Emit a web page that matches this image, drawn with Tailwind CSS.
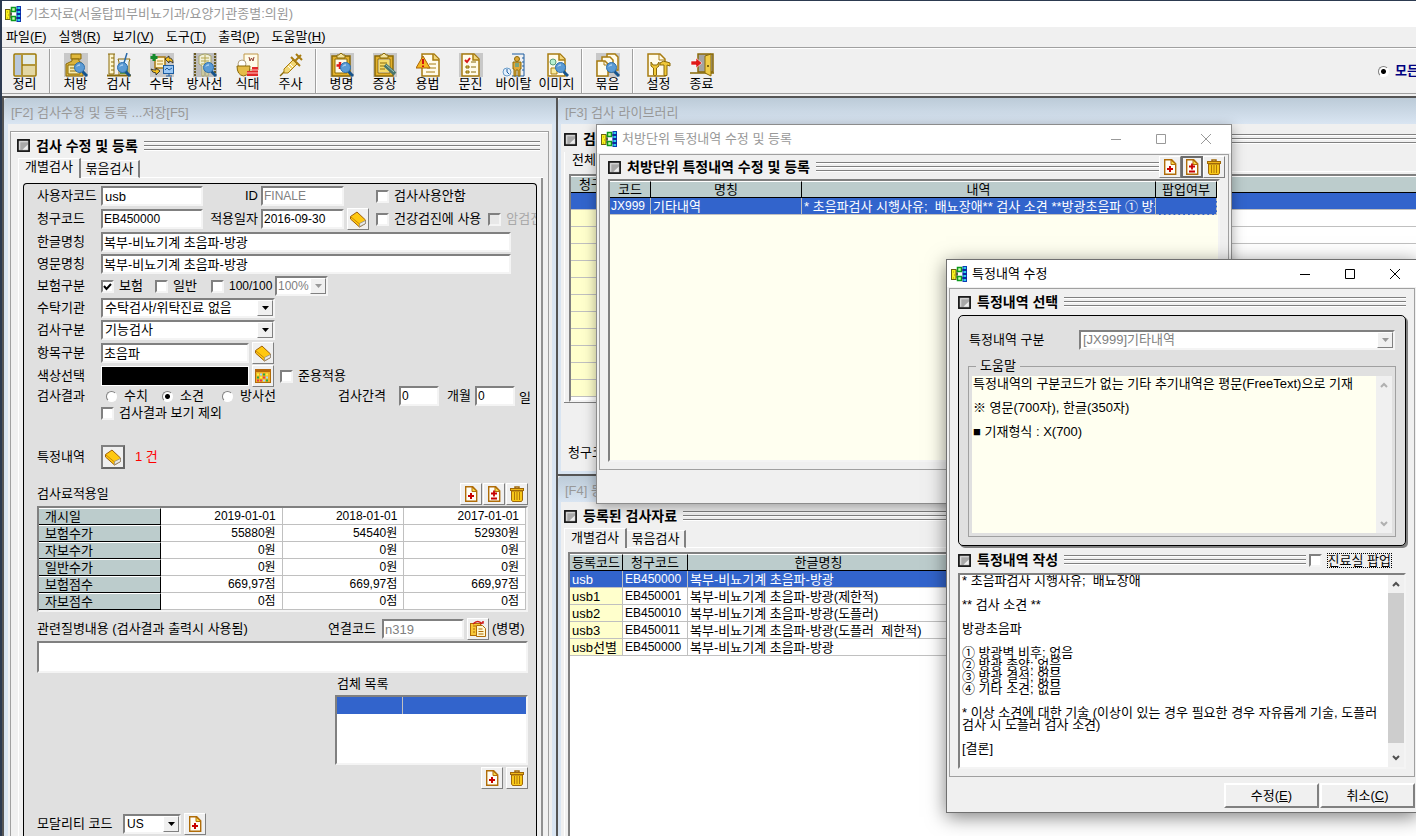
<!DOCTYPE html>
<html lang="ko">
<head>
  <meta charset="UTF-8" />
  <meta name="viewport" content="width=device-width, initial-scale=1.0" />
  <title>기초자료</title>
  <script src="https://cdn.jsdelivr.net/npm/@tailwindcss/browser@4"></script>
</head>
<body class="bg-[#f0f0f0] text-black text-[13px] leading-4 font-['Liberation_Sans','Noto_Sans_CJK_KR',sans-serif]">

  <!-- Icon set -->
  <svg class="hidden">
    <defs>
      <symbol id="app" viewBox="0 0 16 16">
        <path d="M4 8h3M6 4v8M10 4h2M10 12h2" stroke="#222" fill="none"/>
        <rect x=".5" y="3.500" width="4.500" height="10" fill="#f8f01c" stroke="#6b6410"/><path d="M2 6h1M3 9h1M2 12h1" stroke="#a89c10"/>
        <rect x="6.500" y="1.500" width="4" height="4" fill="#c8ffb0" stroke="#0c9a1c" stroke-width="1.500"/>
        <rect x="6.500" y="10.500" width="4" height="4" fill="#c8ffb0" stroke="#0c9a1c" stroke-width="1.500"/>
        <rect x="11.500" y="0" width="4.500" height="16" fill="#0d3ab4"/>
        <path d="M12.500 2h2.500M12.500 6h2.500M12.500 10h2.500M12.500 14h2.500" stroke="#2cd0e8" stroke-width="2"/>
        <path d="M11.500 4h4.500M11.500 8h4.500M11.500 12h4.500" stroke="#04148c"/>
      </symbol>
      <symbol id="mark" viewBox="0 0 12 12">
        <rect x=".8" y=".8" width="10.400" height="10.400" fill="#a8a8a8" stroke="#111" stroke-width="1.500"/>
        <path d="M2 2h8v1H3v7H2z" fill="#e0e0e0"/><path d="M10 5v5H5z" fill="#eee"/>
      </symbol>
      <symbol id="lens" viewBox="0 0 24 24">
        <path d="M18.500 18.500l4.500 4.500" stroke="#16548c" stroke-width="3"/>
        <circle cx="15.500" cy="14.500" r="5" fill="#5b9bd5" stroke="#2d6fae"/>
        <path d="M13 13.500q1-2 3-1.500" stroke="#d4ebff" fill="none"/>
      </symbol>
      <symbol id="layout" viewBox="0 0 24 24">
        <rect x="1" y="1" width="22" height="22" rx="1" fill="#f5efc8" stroke="#9a7808" stroke-width="1.500"/>
        <rect x="2" y="2" width="6" height="20" fill="#b8c8dc"/><path d="M10 2h12v9H10z" fill="#e3ece8"/><path d="M10 13h12v9H10z" fill="#e3d8a4"/>
        <path d="M9 2v20M9 12h13" stroke="#9a7808" stroke-width="1.500"/>
      </symbol>
      <symbol id="bottle" viewBox="0 0 24 24">
        <rect width="24" height="24" fill="#c8c8c8"/>
        <path d="M7 1h10v5H7z" fill="#e0b83c" stroke="#8a6a08"/>
        <path d="M8 6v2L2 11v12h17V11l-4-3V6z" fill="#d9b23c" stroke="#8a6a08"/>
        <path d="M4 12h12v9H4z" fill="#f7ecae" stroke="#8a6a08"/><path d="M6 15h5M6 18h6" stroke="#8a6a08"/>
        <use href="#lens"/>
      </symbol>
      <symbol id="beaker" viewBox="0 0 24 24">
        <path d="M1 1h7M2 1v20h5V1" fill="#fff7d0" stroke="#8a6a08"/><path d="M4 5h3M4 9h3M4 13h3M4 17h3" stroke="#8a6a08"/>
        <path d="M0 22.500h24" stroke="#8a6a08" stroke-width="2"/>
        <path d="M11 6h12l-1 3v13H12V9z" fill="#e8f2f8" stroke="#8a6a08"/><path d="M13 13h8v8h-8z" fill="#5a9448"/>
        <path d="M17 10l3-10" stroke="#2868a8" stroke-width="1.500"/><use href="#lens"/>
      </symbol>
      <symbol id="exchange" viewBox="0 0 24 24">
        <rect width="24" height="24" fill="#c8c8c8"/>
        <path d="M5 4h10v11H5z" fill="#fff5cc" stroke="#a87810" stroke-width="1.500"/><path d="M7 8h6M7 11h6" stroke="#b88820"/>
        <path d="M4 1v7M.5 4.500h7" stroke="#138a2a" stroke-width="3"/>
        <path d="M15 6l4-3v2q4 0 4 5-2-2-4-2v2z" fill="#f4c020" stroke="#222" stroke-width=".8"/>
        <path d="M10 18l-4 4v-2q-4 0-5-4 2 1 5 1v-2z" fill="#f4c020" stroke="#222" stroke-width=".8"/>
        <rect x="13.500" y="12.500" width="10" height="8" fill="#9cc8f4" stroke="#1c5ca0"/><path d="M15 17l2-2 2 2 3-2M16 23h6M19 20v3" stroke="#1c5ca0" fill="none"/>
      </symbol>
      <symbol id="xray" viewBox="0 0 24 24">
        <rect width="24" height="24" fill="#bcbcbc"/>
        <path d="M2 0v24M22 0v24" stroke="#6a5a20" stroke-width="2" stroke-dasharray="2 1"/>
        <path d="M6 3q6-4 12 0v8l-3 2v10h-2v-7h-2v7H9V13l-3-2z" fill="#f0f0d8" stroke="#a8a468"/>
        <path d="M12 2v14M8 5h8M8 8h8M8 11h8" stroke="#b4a44c"/><use href="#lens"/>
      </symbol>
      <symbol id="meal" viewBox="0 0 24 24">
        <path d="M8 1h14v16H8z" fill="#fffbe8" stroke="#c09848"/><path d="M13 4l1 4 1.500-3L17 8l1-4" stroke="#904030" fill="none"/>
        <circle cx="6" cy="11" r="4" fill="#fff" stroke="#b0a080"/><path d="M1 13h13q0 9-6.500 10Q1 22 1 13z" fill="#e4bc48" stroke="#8a6a08"/>
        <path d="M16 14h6v9h-6zM11 18h5v5h-5z" fill="#e02828"/><path d="M16 17h6M11 20h11" stroke="#ffc4c4"/>
      </symbol>
      <symbol id="syringe" viewBox="0 0 24 24">
        <path d="M1 23l6-6" stroke="#8a6a08" stroke-width="1.500"/>
        <path d="M5 16l9-9 4 4-9 9H5z" fill="#f2d878" stroke="#a87c10"/>
        <path d="M16 8l6-6M12 4l9 9M17 1l6 6" stroke="#a87c10" stroke-width="2"/><path d="M9 13l3 3M11 11l3 3" stroke="#fff"/>
      </symbol>
      <symbol id="board" viewBox="0 0 24 24">
        <rect width="24" height="24" fill="#c8c8c8"/>
        <rect x="2" y="3" width="18" height="20" fill="#e2b02c" stroke="#8a6a08" stroke-width="1.500"/>
        <path d="M5 6h12v14H5z" fill="#fffbe8" stroke="#8a6a08"/><path d="M7 5V2h2l1-1.500h2L13 2h2v3z" fill="#f4e4a0" stroke="#8a6a08"/>
      </symbol>
      <symbol id="disease" viewBox="0 0 24 24">
        <use href="#board"/><path d="M10 9v7M6.500 12.500h7" stroke="#e01818" stroke-width="2.500"/><use href="#lens"/>
      </symbol>
      <symbol id="symptom" viewBox="0 0 24 24">
        <use href="#board"/><path d="M6 7h10v12H6z" fill="#f6dc6c"/><path d="M7 10h7M7 13h6M7 16h5" stroke="#8a6a08"/>
        <path d="M12 12l10 9" stroke="#48746c" stroke-width="4"/><path d="M13 12l8 7" stroke="#9cc4b8"/>
      </symbol>
      <symbol id="page" viewBox="0 0 24 24">
        <path d="M3 1h12l5 5v17H3z" fill="#fffbea" stroke="#a87c10" stroke-width="1.500"/><path d="M14 1v6h6" fill="#f4d878" stroke="#a87c10" stroke-width="1.500"/>
      </symbol>
      <symbol id="usage" viewBox="0 0 24 24">
        <g transform="translate(3 0)"><use href="#page"/></g><path d="M13 11h7M11 15h9M10 19h9" stroke="#a87c10"/>
        <path d="M7 3l7 12H0z" fill="#f8b820" stroke="#a86408"/><path d="M7 6v5M7 12.500v1.500" stroke="#d01010" stroke-width="2"/>
      </symbol>
      <symbol id="survey" viewBox="0 0 24 24">
        <rect width="24" height="24" fill="#c8c8c8"/><use href="#page"/>
        <path d="M6 7l2 2 3-4" stroke="#d81818" stroke-width="2" fill="none"/><path d="M7 13h3v2H7zM7 18h3v2H7z" fill="#ecd060" stroke="#8a6a08"/>
        <path d="M12 9h5M12 14h5M12 19h5" stroke="#8a6a08"/>
      </symbol>
      <symbol id="vital" viewBox="0 0 24 24">
        <path d="M10 1h12M22 1v22M10 23h12M20 5h2M20 9h2M20 13h2M20 17h2" stroke="#1c5ca0"/>
        <circle cx="15" cy="6" r="2.500" fill="#e0a838" stroke="#8a6a08"/><path d="M11 9h8v7h-1v7h-2v-6h-2v6h-2v-7h-1z" fill="#e0a838" stroke="#8a6a08"/>
        <path d="M13 10h4v4h-4z" fill="#7ca47c"/><circle cx="5" cy="19" r="4" fill="#e4f0fc" stroke="#6a9cc8"/><path d="M5 16v3l2 2" stroke="#1c5ca0" fill="none"/>
      </symbol>
      <symbol id="image" viewBox="0 0 24 24">
        <use href="#page"/><circle cx="8" cy="9" r="3" fill="#b8f0d0" stroke="#5a9c78"/><path d="M6 15h6v6H6z" fill="#f8eca0" stroke="#a87c10"/><use href="#lens"/>
      </symbol>
      <symbol id="bundle" viewBox="0 0 24 24">
        <rect width="24" height="24" fill="#c8c8c8"/>
        <path d="M11 1h8l3 3v13H11z" fill="#fffbea" stroke="#a87c10" stroke-width="1.500"/>
        <path d="M6 4h8l3 3v12H6z" fill="#fffbea" stroke="#a87c10" stroke-width="1.500"/>
        <path d="M1 8h8l3 3v12H1z" fill="#fffbea" stroke="#a87c10" stroke-width="1.500"/><path d="M8 8v4h4" fill="none" stroke="#a87c10"/><use href="#lens"/>
      </symbol>
      <symbol id="tools" viewBox="0 0 24 24">
        <path d="M1 1h12l5 5v17H1z" fill="#fffbea" stroke="#a87c10" stroke-width="1.500"/><path d="M12 1v6h6" fill="none" stroke="#a87c10"/>
        <path d="M4 9v4l2.500 2v7q1.500 2 3 0v-7l2.500-2V9l-2 3H6z" fill="#f0c838" stroke="#8a6a08"/>
        <path d="M13 10q3-3 7-1l3 1v3l-3-1v10.500h-3V12h-4z" fill="#f0c838" stroke="#8a6a08"/>
      </symbol>
      <symbol id="door" viewBox="0 0 24 24">
        <path d="M8 1h15v18H8z" fill="#a4a4a4" stroke="#8a6a08" stroke-width="1.500"/><path d="M0 20h24" stroke="#8a6a08" stroke-width="1.500"/>
        <path d="M15 3l6-2v22l-6-3z" fill="#f0cc48" stroke="#8a6a08"/><path d="M18 12v2" stroke="#5a4404" stroke-width="1.500"/>
        <path d="M1 8h5V5l6 5-6 5v-3H1z" fill="#e01818" stroke="#fff" stroke-width=".6"/>
      </symbol>
      <symbol id="doc" viewBox="0 0 16 16">
        <path d="M2.700 .7h7l4 4v10.600h-11z" fill="#fffdf4" stroke="#b06c08" stroke-width="1.400"/><path d="M9 1v4.500h5z" fill="#f8d848" stroke="#b06c08"/>
      </symbol>
      <symbol id="add" viewBox="0 0 16 16"><use href="#doc"/><path d="M8 7v6M5 10h6" stroke="#c80000" stroke-width="2"/></symbol>
      <symbol id="edit" viewBox="0 0 16 16"><use href="#doc"/><path d="M8 4.500v6M5 7.500h6M5 12.500h6" stroke="#c80000" stroke-width="1.800"/></symbol>
      <symbol id="trash" viewBox="0 0 16 16">
        <path d="M6 2V1h4v1" stroke="#a06808" stroke-width="1.500" fill="none"/><rect x="1.500" y="2.500" width="13" height="2" fill="#f0b818" stroke="#a06808"/>
        <path d="M2.500 5h11v9l-1 1.500h-9l-1-1.500z" fill="#f8c818" stroke="#a06808"/><path d="M5.500 6v8M8 6v8M10.500 6v8" stroke="#b07808"/>
      </symbol>
      <symbol id="book" viewBox="0 0 18 18">
        <path d="M1.500 6.500L8 2l8.500 8v3.500L10.500 17 1.500 9z" fill="#ffc810" stroke="#a06008"/>
        <path d="M10.500 13.500l6-3v3l-6 3.200z" fill="#e8e8e8" stroke="#888" stroke-width=".7"/><path d="M2 7l8.500 7" stroke="#c88808"/>
      </symbol>
      <symbol id="palette" viewBox="0 0 16 14">
        <rect x=".5" y=".5" width="15" height="13" fill="#f0b428" stroke="#b06c08"/><path d="M0 0h16v3H0z" fill="#b8690a"/>
        <path d="M2 5.500h2M11 5.500h2M5 8.500h2" stroke="#f4f840" stroke-width="2"/>
        <path d="M8 5.500h2M2 8.500h2M11 11.500h2" stroke="#28a848" stroke-width="2"/>
        <path d="M5 11.500h2M8 8.500h2M2 11.500h2" stroke="#e83850" stroke-width="2"/><path d="M5 5.500h2M11 8.500h2M8 11.500h2" stroke="#a0d8ff" stroke-width="2"/>
      </symbol>
      <symbol id="copy" viewBox="0 0 18 18">
        <rect x="1.500" y="3.500" width="10" height="12" fill="#f8c838" stroke="#b06c08"/><path d="M7.500 5.500h6l3 3v8h-9z" fill="#fff8d0" stroke="#b06c08"/>
        <path d="M4 6h3M4 9h2M4 12h2M9.500 9h4M9.500 11.500h5M9.500 14h5" stroke="#b06c08"/><path d="M4 4q5-5 9 0M11 3h3V1" stroke="#d01818" stroke-width="1.500" fill="none"/>
      </symbol>
      <symbol id="down" viewBox="0 0 7 4"><path d="M0 0h7L3.500 4z" fill="currentColor"/></symbol>
      <symbol id="chev" viewBox="0 0 8 6"><path d="M1 5l3-3 3 3" fill="none" stroke="currentColor" stroke-width="2"/></symbol>
      <symbol id="wmin" viewBox="0 0 12 12"><path d="M1 6.500h10" stroke="currentColor"/></symbol>
      <symbol id="wmax" viewBox="0 0 12 12"><path d="M1.500 1.500h9v9h-9z" fill="none" stroke="currentColor"/></symbol>
      <symbol id="wclose" viewBox="0 0 12 12"><path d="M1 1l10 10M11 1L1 11" stroke="currentColor"/></symbol>
    </defs>
  </svg>

  <div class="relative h-screen flex flex-col overflow-hidden border-t border-l-2 border-[#2c3a50]">

    <!-- Title bar -->
    <header class="h-[26px] shrink-0 bg-white flex items-center gap-[5px] pl-[3px] text-[#999]">
      <svg class="size-4"><use href="#app"/></svg>
      <h1>기초자료(서울탑피부비뇨기과/요양기관종별:의원)</h1>
    </header>

    <!-- Menu -->
    <nav class="h-5 shrink-0 flex items-center gap-3 pl-1 whitespace-nowrap">
      <a href="#">파일(<u>F</u>)</a>
      <a href="#">실행(<u>R</u>)</a>
      <a href="#">보기(<u>V</u>)</a>
      <a href="#">도구(<u>T</u>)</a>
      <a href="#">출력(<u>P</u>)</a>
      <a href="#">도움말(<u>H</u>)</a>
    </nav>

    <!-- Toolbar -->
    <div class="h-[49px] shrink-0 flex border-t border-[#a0a0a0] overflow-hidden">
      <div class="flex flex-1 h-[46px] border-y border-t-white border-b-[#a0a0a0]">
        <div id="toolbar" class="flex pl-px"></div>
        <label class="ml-auto w-[38px] flex items-center gap-[6px] overflow-hidden whitespace-nowrap font-bold text-[#000080]">
          <input type="radio" name="scope" checked class="appearance-none shrink-0 size-[11px] rounded-full border [border-color:#808080_#fff_#fff_#808080] bg-[radial-gradient(#000_0_2px,#fff_3px)]" />모든
        </label>
      </div>
    </div>

    <main class="flex-1 min-h-0 flex border-t-2 border-l-2 border-[#555]">

      <!-- [F2] edit pane -->
      <section class="w-[552px] shrink-0 flex flex-col">
        <h2 class="h-[26px] shrink-0 flex items-center pt-[3px] pl-[7px] text-[#999] bg-linear-to-b from-[#bccbd8] to-[#d9e5f2] rounded-tl">[F2] 검사수정 및 등록 ...저장[F5]</h2>
        <div class="flex-1 min-h-0 flex flex-col border-x-4 border-[#d9e5f2] pt-[7px] pl-[2px] pr-[3px]">
          <div class="flex-1 min-h-0 flex flex-col border border-b-0 border-[#a0a0a0]">
            <div class="h-[26px] shrink-0 flex items-center gap-[6px] pl-[6px] pr-2 border-t border-white">
              <svg class="size-[13px]"><use href="#mark"/></svg>
              <h3 class="text-sm leading-4 font-bold">검사 수정 및 등록</h3>
              <div class="flex-1 h-[10px] bg-[repeating-linear-gradient(#808080_0_1px,#fff_1px_2px,#f0f0f0_2px_4px)]"></div>
            </div>
            <div class="h-5 shrink-0 flex items-end ml-[7px] mr-[5px]">
              <button class="h-5 w-[63px] pb-1 border-t border-l border-t-white border-l-white border-r-2 border-r-[#808080]">개별검사</button>
              <button class="h-[18px] w-[59px] border-t border-b border-white border-r-2 border-r-[#808080]">묶음검사</button>
              <div class="flex-1 border-b border-white"></div>
            </div>
            <div class="flex-1 min-h-0 flex flex-col ml-[7px] mr-[5px] pt-[5px] pl-1 pr-1 border-l border-l-white border-r-2 border-r-[#909090]">
              <form class="flex-1 min-h-0 overflow-hidden bg-[#e0e0e0] border border-b-0 border-black rounded-t-[4px] pl-[13px] pt-px whitespace-nowrap">

                <div class="h-[22px] flex items-center *:shrink-0">
                  <label for="userCode" class="w-16">사용자코드</label>
                  <input id="userCode" value="usb" class="w-[102px] h-5 bg-white px-[2px] border-2 [border-color:#808080_#f4f4f4_#f4f4f4_#808080]" />
                  <label for="ownerId" class="w-[58px] text-right pr-[3px]">ID</label>
                  <input id="ownerId" value="FINALE" disabled class="w-[83px] h-5 bg-white text-xs text-[#808080] px-px border-2 [border-color:#808080_#f4f4f4_#f4f4f4_#808080]" />
                  <input id="unused" type="checkbox" class="appearance-none size-[13px] ml-8 mr-[5px] bg-white border-2 [border-color:#808080_#f4f4f4_#f4f4f4_#808080]" />
                  <label for="unused">검사사용안함</label>
                </div>

                <div class="h-6 flex items-center *:shrink-0">
                  <label for="claimCode" class="w-16">청구코드</label>
                  <input id="claimCode" value="EB450000" class="w-[102px] h-5 bg-white text-xs px-px border-2 [border-color:#808080_#f4f4f4_#f4f4f4_#808080]" />
                  <label for="applyDate" class="w-[58px] text-right pr-[3px]">적용일자</label>
                  <input id="applyDate" value="2016-09-30" class="w-[83px] h-5 bg-white text-xs px-px border-2 [border-color:#808080_#f4f4f4_#f4f4f4_#808080]" />
                  <button type="button" aria-label="날짜 찾기" class="size-[22px] ml-[3px] flex items-center justify-center bg-[#f0f0f0] border [border-color:#fff_#808080_#808080_#fff]"><svg class="size-[18px]"><use href="#book"/></svg></button>
                  <input id="checkup" type="checkbox" class="appearance-none size-[13px] ml-[7px] mr-[5px] bg-white border-2 [border-color:#808080_#f4f4f4_#f4f4f4_#808080]" />
                  <label for="checkup">건강검진에 사용</label>
                  <input id="cancer" type="checkbox" disabled class="appearance-none size-[13px] ml-[7px] mr-[5px] bg-[#e8e8e8] border-2 [border-color:#808080_#f4f4f4_#f4f4f4_#808080]" />
                  <label for="cancer" class="text-[#a8a8a8]">암검진</label>
                </div>

                <div class="h-[22px] flex items-center">
                  <label for="nameKo" class="w-16">한글명칭</label>
                  <input id="nameKo" value="복부-비뇨기계 초음파-방광" class="w-[410px] h-5 bg-white px-px pb-[2px] border-2 [border-color:#808080_#f4f4f4_#f4f4f4_#808080]" />
                </div>
                <div class="h-[22px] flex items-center">
                  <label for="nameEn" class="w-16">영문명칭</label>
                  <input id="nameEn" value="복부-비뇨기계 초음파-방광" class="w-[410px] h-5 bg-white px-px pb-[2px] border-2 [border-color:#808080_#f4f4f4_#f4f4f4_#808080]" />
                </div>

                <div class="h-[22px] flex items-center">
                  <span class="w-16">보험구분</span>
                  <label class="w-[54px] flex items-center gap-[5px]"><span class="relative flex"><input type="checkbox" checked class="appearance-none size-[13px] bg-white border-2 [border-color:#808080_#f4f4f4_#f4f4f4_#808080]" /><svg class="absolute inset-0 size-[13px]" viewBox="0 0 13 13"><path d="M3 6l2.500 3L10 4" fill="none" stroke="#000" stroke-width="2"/></svg></span>보험</label>
                  <label class="w-14 flex items-center gap-[5px]"><input type="checkbox" class="appearance-none size-[13px] bg-white border-2 [border-color:#808080_#f4f4f4_#f4f4f4_#808080]" />일반</label>
                  <label class="w-16 flex items-center gap-[5px] text-xs"><input type="checkbox" class="appearance-none size-[13px] bg-white border-2 [border-color:#808080_#f4f4f4_#f4f4f4_#808080]" />100/100</label>
                  <div class="w-[53px] h-5 flex bg-white border-2 [border-color:#808080_#f4f4f4_#f4f4f4_#808080]">
                    <select disabled aria-label="본인부담률" class="appearance-none flex-1 min-w-0 pl-px text-xs text-[#808080]"><option>100%</option></select>
                    <span class="w-4 flex items-center justify-center text-[#999] bg-[#f0f0f0] border [border-color:#fff_#808080_#808080_#fff]"><svg class="w-[7px] h-1"><use href="#down"/></svg></span>
                  </div>
                </div>

                <div class="h-[22px] flex items-center">
                  <label for="agency" class="w-16">수탁기관</label>
                  <div class="w-[174px] h-5 flex bg-white border-2 [border-color:#808080_#f4f4f4_#f4f4f4_#808080]">
                    <select id="agency" class="appearance-none flex-1 min-w-0 pl-[2px]"><option>수탁검사/위탁진료 없음</option></select>
                    <span class="w-4 flex items-center justify-center bg-[#f0f0f0] border [border-color:#fff_#808080_#808080_#fff]"><svg class="w-[7px] h-1"><use href="#down"/></svg></span>
                  </div>
                </div>
                <div class="h-[22px] flex items-center">
                  <label for="kind" class="w-16">검사구분</label>
                  <div class="w-[174px] h-5 flex bg-white border-2 [border-color:#808080_#f4f4f4_#f4f4f4_#808080]">
                    <select id="kind" class="appearance-none flex-1 min-w-0 pl-[2px]"><option>기능검사</option></select>
                    <span class="w-4 flex items-center justify-center bg-[#f0f0f0] border [border-color:#fff_#808080_#808080_#fff]"><svg class="w-[7px] h-1"><use href="#down"/></svg></span>
                  </div>
                </div>

                <div class="h-6 flex items-center">
                  <label for="item" class="w-16">항목구분</label>
                  <input id="item" value="초음파" class="w-[148px] h-5 bg-white px-px pb-[2px] border-2 [border-color:#808080_#f4f4f4_#f4f4f4_#808080]" />
                  <button type="button" aria-label="항목 찾기" class="size-[22px] ml-[3px] flex items-center justify-center bg-[#f0f0f0] border [border-color:#fff_#808080_#808080_#fff]"><svg class="size-[18px]"><use href="#book"/></svg></button>
                </div>
                <div class="h-[22px] flex items-center">
                  <span class="w-16">색상선택</span>
                  <div class="w-[148px] h-5 bg-black border border-white"></div>
                  <button type="button" aria-label="색상 선택" class="size-[22px] ml-[3px] flex items-center justify-center bg-[#f0f0f0] border [border-color:#fff_#808080_#808080_#fff]"><svg class="w-4 h-[14px]"><use href="#palette"/></svg></button>
                  <label class="ml-[6px] flex items-center gap-[5px]"><input type="checkbox" class="appearance-none size-[13px] bg-white border-2 [border-color:#808080_#f4f4f4_#f4f4f4_#808080]" />준용적용</label>
                </div>

                <div class="h-[18px] flex items-center">
                  <span class="w-[69px]">검사결과</span>
                  <label class="w-14 flex items-center gap-[7px]"><input type="radio" name="result" class="appearance-none size-[11px] rounded-full bg-white border [border-color:#808080_#fff_#fff_#808080]" />수치</label>
                  <label class="w-[60px] flex items-center gap-[7px]"><input type="radio" name="result" checked class="appearance-none size-[11px] rounded-full border [border-color:#808080_#fff_#fff_#808080] bg-[radial-gradient(#000_0_2px,#fff_3px)]" />소견</label>
                  <label class="w-[116px] flex items-center gap-[7px]"><input type="radio" name="result" class="appearance-none size-[11px] rounded-full bg-white border [border-color:#808080_#fff_#fff_#808080]" />방사선</label>
                  <label for="months" class="w-[61px]">검사간격</label>
                  <input id="months" value="0" class="w-10 h-5 bg-white text-xs px-px border-2 [border-color:#808080_#f4f4f4_#f4f4f4_#808080]" />
                  <label for="days" class="w-9 pl-2">개월</label>
                  <input id="days" value="0" class="w-10 h-5 bg-white text-xs px-px border-2 [border-color:#808080_#f4f4f4_#f4f4f4_#808080]" />
                  <span class="pl-1 pt-1">일</span>
                </div>
                <label class="h-4 ml-16 flex items-center gap-[5px]"><input type="checkbox" class="appearance-none size-[13px] bg-white border-2 [border-color:#808080_#f4f4f4_#f4f4f4_#808080]" />검사결과 보기 제외</label>

                <div class="mt-6 h-6 flex items-center">
                  <span class="w-16">특정내역</span>
                  <button type="button" aria-label="특정내역" class="size-6 flex items-center justify-center bg-[#f0f0f0] border-2 [border-color:#808080_#666_#666_#808080]"><svg class="size-[18px]"><use href="#book"/></svg></button>
                  <span class="ml-[10px] text-[#ff0000]">1 건</span>
                </div>

                <div class="mt-[14px] h-[22px] w-[491px] flex items-center">
                  <h4 class="flex-1">검사료적용일</h4>
                  <div class="flex gap-px">
                    <button type="button" aria-label="추가" class="size-[22px] flex items-center justify-center bg-[#f0f0f0] border [border-color:#fff_#808080_#808080_#fff]"><svg class="size-4"><use href="#add"/></svg></button>
                    <button type="button" aria-label="수정" class="size-[22px] flex items-center justify-center bg-[#f0f0f0] border [border-color:#fff_#808080_#808080_#fff]"><svg class="size-4"><use href="#edit"/></svg></button>
                    <button type="button" aria-label="삭제" class="size-[22px] flex items-center justify-center bg-[#f0f0f0] border [border-color:#fff_#808080_#808080_#fff]"><svg class="size-4"><use href="#trash"/></svg></button>
                  </div>
                </div>
                <div class="mt-px w-[491px] bg-white border-2 [border-color:#808080_#f4f4f4_#f4f4f4_#808080]">
                  <table class="w-full table-fixed border-separate border-spacing-0 leading-[15px]">
                    <tbody id="feeRows"></tbody>
                  </table>
                </div>

                <div class="mt-[6px] h-[22px] w-[491px] flex items-center">
                  <label for="related" class="flex-1">관련질병내용 (검사결과 출력시 사용됨)</label>
                  <label for="linkCode" class="w-[54px]">연결코드</label>
                  <input id="linkCode" value="n319" disabled class="w-[82px] h-5 bg-white text-[#808080] px-px border-2 [border-color:#808080_#f4f4f4_#f4f4f4_#808080]" />
                  <button type="button" aria-label="병명 찾기" class="size-[22px] mx-[3px] flex items-center justify-center bg-[#f0f0f0] border [border-color:#fff_#808080_#808080_#fff]"><svg class="size-[18px]"><use href="#copy"/></svg></button>
                  <span class="w-9">(병명)</span>
                </div>
                <textarea id="related" class="block mt-px w-[491px] h-8 resize-none bg-white border-2 [border-color:#808080_#f4f4f4_#f4f4f4_#808080]"></textarea>

                <div class="ml-[298px] w-[193px]">
                  <h4 class="h-[22px] flex items-center pl-[2px]">검체 목록</h4>
                  <div class="h-[70px] bg-white border-2 [border-color:#808080_#f4f4f4_#f4f4f4_#808080]">
                    <table class="w-full border-separate border-spacing-0">
                      <tbody><tr class="h-[17px] bg-[#3264cc]"><td class="w-[66px] border-r border-[#c0c0c0]"></td><td></td></tr></tbody>
                    </table>
                  </div>
                  <div class="mt-[2px] flex justify-end gap-[3px]">
                    <button type="button" aria-label="검체 추가" class="size-[22px] flex items-center justify-center bg-[#f0f0f0] border [border-color:#fff_#808080_#808080_#fff]"><svg class="size-4"><use href="#add"/></svg></button>
                    <button type="button" aria-label="검체 삭제" class="size-[22px] flex items-center justify-center bg-[#f0f0f0] border [border-color:#fff_#808080_#808080_#fff]"><svg class="size-4"><use href="#trash"/></svg></button>
                  </div>
                </div>

                <div class="mt-6 h-[22px] flex items-center">
                  <label for="modality" class="w-[86px]">모달리티 코드</label>
                  <div class="w-[58px] h-5 flex bg-white border-2 [border-color:#808080_#f4f4f4_#f4f4f4_#808080]">
                    <select id="modality" class="appearance-none flex-1 min-w-0 pl-[2px] text-xs"><option>US</option></select>
                    <span class="w-4 flex items-center justify-center bg-[#f0f0f0] border [border-color:#fff_#808080_#808080_#fff]"><svg class="w-[7px] h-1"><use href="#down"/></svg></span>
                  </div>
                  <button type="button" aria-label="모달리티 추가" class="size-[22px] ml-[3px] flex items-center justify-center bg-[#f0f0f0] border [border-color:#fff_#808080_#808080_#fff]"><svg class="size-4"><use href="#add"/></svg></button>
                </div>
              </form>
            </div>
          </div>
        </div>
      </section>

      <!-- Right column -->
      <div class="flex-1 min-w-0 flex flex-col border-l-2 border-[#555]">

        <!-- [F3] library -->
        <section class="shrink-0 flex flex-col">
          <h2 class="h-[26px] flex items-center pt-[3px] pl-[7px] text-[#999] bg-linear-to-b from-[#bccbd8] to-[#d9e5f2] rounded-tl">[F3] 검사 라이브러리</h2>
          <div class="border-l-3 border-b-3 border-[#d9e5f2] pl-[3px] pt-[2px]">
            <div class="h-[26px] flex items-center gap-[6px]">
              <svg class="size-[13px]"><use href="#mark"/></svg>
              <h3 class="text-sm leading-4 font-bold">검사 라이브러리</h3>
              <div class="flex-1 h-[10px] bg-[repeating-linear-gradient(#808080_0_1px,#fff_1px_2px,#f0f0f0_2px_4px)]"></div>
            </div>
            <div class="border-l border-white pl-1">
              <div class="h-5 flex"><button class="px-[3px] pb-1 border-r-2 border-[#808080]">전체</button><div class="flex-1 border-b border-white"></div></div>
              <div class="mt-[2px] h-[228px] bg-white border-2 border-r-0 [border-color:#808080_#f4f4f4_#f4f4f4_#808080]">
                <table class="w-full table-fixed border-separate border-spacing-0 leading-[15px]">
                  <thead><tr class="h-[17px] bg-[#bccccc]"><th class="w-[65px] p-0 pl-2 font-normal text-left border-t border-t-white border-r border-b border-black">청구코드</th><th class="p-0 border-t border-t-white border-b border-black"></th></tr></thead>
                  <tbody id="libraryRows"></tbody>
                </table>
              </div>
            </div>
            <div class="h-[69px] border-t border-[#808080] flex items-end pl-1 pb-[10px]">청구코드</div>
          </div>
        </section>

        <!-- [F4] registered data -->
        <section class="flex-1 min-h-0 flex flex-col border-t-2 border-[#555]">
          <h2 class="h-[26px] shrink-0 flex items-center pt-[3px] pl-[7px] text-[#999] bg-linear-to-b from-[#bccbd8] to-[#d9e5f2] rounded-tl">[F4] 등록된 검사자료</h2>
          <div class="flex-1 min-h-0 flex flex-col border-l-3 border-[#d9e5f2] pl-[3px] pt-[2px]">
            <div class="h-6 shrink-0 flex items-center gap-[6px]">
              <svg class="size-[13px]"><use href="#mark"/></svg>
              <h3 class="text-sm leading-4 font-bold">등록된 검사자료</h3>
              <div class="flex-1 h-[10px] bg-[repeating-linear-gradient(#808080_0_1px,#fff_1px_2px,#f0f0f0_2px_4px)]"></div>
            </div>
            <div class="h-5 shrink-0 flex items-end">
              <button class="h-5 w-[63px] pb-px border-t border-l border-t-white border-l-white border-r-2 border-r-[#808080]">개별검사</button>
              <button class="h-[18px] w-[59px] border-t border-b border-white border-r-2 border-r-[#808080]">묶음검사</button>
              <div class="flex-1 border-b border-white"></div>
            </div>
            <div class="flex-1 min-h-0 border-l border-white pl-[3px] pt-[4px]">
              <div class="h-full bg-white border-t-2 border-l-2 border-[#808080]">
                <table class="w-full table-fixed border-separate border-spacing-0 leading-[15px]">
                  <thead>
                    <tr class="h-[17px] bg-[#bccccc]">
                      <th class="w-[53px] p-0 font-normal border-t border-t-white border-r border-b border-black">등록코드</th>
                      <th class="w-[65px] p-0 font-normal border-t border-t-white border-r border-b border-black">청구코드</th>
                      <th class="w-[262px] p-0 font-normal border-t border-t-white border-r border-b border-black">한글명칭</th>
                      <th class="border-t border-t-white border-b border-black"></th>
                    </tr>
                  </thead>
                  <tbody id="registeredRows"></tbody>
                </table>
              </div>
            </div>
          </div>
        </section>
      </div>
    </main>

    <!-- Order detail window -->
    <section class="absolute left-[594px] top-[123px] w-[636px] bg-[#f0f0f0] border border-[#8c8c8c] shadow-[0_3px_12px_rgba(0,0,0,0.35)]">
      <header class="h-7 bg-white flex items-center pl-1 pr-[3px] text-[#999]">
        <svg class="size-4"><use href="#app"/></svg>
        <h2 class="flex-1 pl-[5px]">처방단위 특정내역 수정 및 등록</h2>
        <button aria-label="최소화" class="w-[45px] flex justify-center"><svg class="size-3"><use href="#wmin"/></svg></button>
        <button aria-label="최대화" class="w-[45px] flex justify-center"><svg class="size-3"><use href="#wmax"/></svg></button>
        <button aria-label="닫기" class="w-[45px] flex justify-center"><svg class="size-3"><use href="#wclose"/></svg></button>
      </header>
      <div class="mx-[2px] mt-px mb-[33px] border border-[#a0a0a0] pl-2 pr-[3px] pb-[7px]">
        <div class="h-6 flex items-center">
          <svg class="size-[13px]"><use href="#mark"/></svg>
          <h3 class="mx-[6px] text-sm leading-4 font-bold">처방단위 특정내역 수정 및 등록</h3>
          <div class="flex-1 h-[10px] bg-[repeating-linear-gradient(#808080_0_1px,#fff_1px_2px,#f0f0f0_2px_4px)]"></div>
          <button aria-label="추가" class="size-[22px] flex items-center justify-center bg-[#f0f0f0] border [border-color:#fff_#808080_#808080_#fff]"><svg class="size-4"><use href="#add"/></svg></button>
          <button aria-label="수정" class="size-[22px] flex items-center justify-center bg-[#f0f0f0] border-2 border-[#6c6c6c]"><svg class="size-4"><use href="#edit"/></svg></button>
          <button aria-label="삭제" class="size-[22px] flex items-center justify-center bg-[#f0f0f0] border [border-color:#fff_#808080_#808080_#fff]"><svg class="size-4"><use href="#trash"/></svg></button>
        </div>
        <div class="mr-[5px] h-[283px] bg-[#fffff0] border-2 [border-color:#808080_#f4f4f4_#f4f4f4_#808080]">
          <table class="w-[607px] table-fixed border-separate border-spacing-0 whitespace-nowrap leading-[15px]">
            <thead>
              <tr class="h-[17px] bg-[#bccccc]">
                <th class="w-[41px] p-0 font-normal border-t border-t-white border-r border-b border-black">코드</th>
                <th class="w-[151px] p-0 font-normal border-t border-t-white border-r border-b border-black">명칭</th>
                <th class="p-0 font-normal border-t border-t-white border-r border-b border-black">내역</th>
                <th class="w-[61px] p-0 font-normal border-t border-t-white border-r border-b border-black">팝업여부</th>
              </tr>
            </thead>
            <tbody>
              <tr class="h-[17px] bg-[#3264cc] text-white">
                <td class="p-0 pl-px text-xs border-r border-b border-[#c0c0c0]">JX999</td>
                <td class="p-0 pl-[2px] border-r border-b border-[#c0c0c0]">기타내역</td>
                <td class="p-0 pl-[2px] overflow-hidden border-r border-b border-[#c0c0c0]">* 초음파검사 시행사유;&nbsp; 배뇨장애** 검사 소견 **방광초음파 ① 방광벽 비후</td>
                <td class="p-0 border-r border-b border-dashed border-[#c0c0c0]"></td>
              </tr>
            </tbody>
          </table>
        </div>
      </div>
    </section>

    <!-- Detail edit window -->
    <section class="absolute left-[944px] -right-[2px] top-[258px] bg-[#f0f0f0] border border-[#707070] shadow-[0_4px_18px_rgba(0,0,0,0.5)]">
      <header class="h-[27px] bg-white flex items-center pl-1">
        <svg class="size-4"><use href="#app"/></svg>
        <h2 class="flex-1 pl-[5px]">특정내역 수정</h2>
        <button aria-label="최소화" class="w-[45px] flex justify-center"><svg class="size-3"><use href="#wmin"/></svg></button>
        <button aria-label="최대화" class="w-[45px] flex justify-center"><svg class="size-3"><use href="#wmax"/></svg></button>
        <button aria-label="닫기" class="w-[45px] flex justify-center"><svg class="size-3"><use href="#wclose"/></svg></button>
      </header>
      <div class="ml-[2px] mr-[2px] mt-px border border-[#a0a0a0] pl-2 pr-2 pb-[7px]">
        <div class="h-[26px] flex items-center gap-[6px]">
          <svg class="size-[13px]"><use href="#mark"/></svg>
          <h3 class="text-sm leading-4 font-bold">특정내역 선택</h3>
          <div class="flex-1 h-[10px] bg-[repeating-linear-gradient(#808080_0_1px,#fff_1px_2px,#f0f0f0_2px_4px)]"></div>
        </div>
        <div class="bg-[#e0e0e0] border border-black rounded-[5px] shadow-[2px_2px_0_#808080] px-[10px] pt-[14px] pb-2">
          <div class="flex items-center">
            <label for="detailKind" class="w-[110px]">특정내역 구분</label>
            <div class="flex-1 h-5 flex bg-white border-2 [border-color:#808080_#f4f4f4_#f4f4f4_#808080]">
              <select id="detailKind" disabled class="appearance-none flex-1 min-w-0 pl-[2px] text-[#808080]"><option>[JX999]기타내역</option></select>
              <span class="w-4 flex items-center justify-center text-[#999] bg-[#f0f0f0] border [border-color:#fff_#808080_#808080_#fff]"><svg class="w-[7px] h-1"><use href="#down"/></svg></span>
            </div>
          </div>
          <fieldset class="mt-2 -mx-px border border-[#a0a0a0] px-[3px] pb-[3px]">
            <legend class="ml-1 px-1">도움말</legend>
            <div class="mt-[2px] h-[157px] flex bg-[#fffff0]">
              <textarea readonly aria-label="도움말" class="flex-1 resize-none overflow-hidden p-px leading-6 -mt-[5px]">특정내역의 구분코드가 없는 기타 추기내역은 평문(FreeText)으로 기재
※ 영문(700자), 한글(350자)
■ 기재형식 : X(700)</textarea>
              <div class="w-4 bg-[#f0f0f0] flex flex-col items-center justify-between py-[6px] text-[#b0b0b0]">
                <svg class="w-2 h-[6px]"><use href="#chev"/></svg>
                <svg class="w-2 h-[6px] rotate-180"><use href="#chev"/></svg>
              </div>
            </div>
          </fieldset>
        </div>

        <div class="mt-px h-[26px] flex items-center gap-[6px]">
          <svg class="size-[13px]"><use href="#mark"/></svg>
          <h3 class="text-sm leading-4 font-bold">특정내역 작성</h3>
          <div class="flex-1 h-[10px] bg-[repeating-linear-gradient(#808080_0_1px,#fff_1px_2px,#f0f0f0_2px_4px)]"></div>
          <label class="flex items-center gap-[5px] pr-[14px] -ml-[3px]"><input type="checkbox" class="appearance-none size-[13px] bg-white border-2 [border-color:#808080_#f4f4f4_#f4f4f4_#808080]" /><span class="h-[15px] leading-[13px] border border-dotted border-black">진료실 팝업</span></label>
        </div>
        <div class="h-[196px] flex bg-white border-2 [border-color:#808080_#f4f4f4_#f4f4f4_#808080]">
          <textarea aria-label="특정내역 작성" class="flex-1 resize-none overflow-hidden pl-[2px] leading-3">* 초음파검사 시행사유;  배뇨장애

** 검사 소견 **

방광초음파

① 방광벽 비후; 없음
② 방광 종양; 없음
③ 방광 결석; 없음
④ 기타 소견; 없음

* 이상 소견에 대한 기술 (이상이 있는 경우 필요한 경우 자유롭게 기술, 도플러 검사 시 도플러 검사 소견)

[결론]</textarea>
          <div class="w-4 bg-[#f0f0f0] flex flex-col items-center text-[#505050]">
            <svg class="w-2 h-[6px] my-[6px] shrink-0"><use href="#chev"/></svg>
            <div class="w-full h-[150px] bg-[#cdcdcd]"></div>
            <svg class="w-2 h-[6px] mt-auto mb-[6px] rotate-180"><use href="#chev"/></svg>
          </div>
        </div>
      </div>
      <div class="flex justify-end gap-px pt-[6px] pb-[4px] pr-[2px]">
        <button class="w-[95px] h-[25px] border-2 [border-color:#fff_#808080_#808080_#fff]">수정(<u>E</u>)</button>
        <button class="w-[95px] h-[25px] border-2 [border-color:#fff_#808080_#808080_#fff]">취소(<u>C</u>)</button>
      </div>
    </section>
  </div>

  <script>
    // null marks a separator
    const tools = [
      ["layout", "정리"], null,
      ["bottle", "처방"], ["beaker", "검사"], ["exchange", "수탁"], ["xray", "방사선"], ["meal", "식대"], ["syringe", "주사"], null,
      ["disease", "병명"], ["symptom", "증상"], ["usage", "용법"], ["survey", "문진"], ["vital", "바이탈"], ["image", "이미지"], null,
      ["bundle", "묶음"], null,
      ["tools", "설정"], ["door", "종료"]
    ];

    document.getElementById("toolbar").innerHTML = tools.map(t => t
      ? `<button class="w-[43px] flex flex-col items-center pt-1 whitespace-nowrap"><svg class="size-6 shrink-0"><use href="#${t[0]}"/></svg><span class="leading-[14px]">${t[1]}</span></button>`
      : `<div class="w-2 flex justify-center"><div class="w-[2px] border-l border-[#a0a0a0] bg-white"></div></div>`
    ).join("");

    const fees = [
      ["개시일", "2019-01-01", "2018-01-01", "2017-01-01"],
      ["보험수가", "55880원", "54540원", "52930원"],
      ["자보수가", "0원", "0원", "0원"],
      ["일반수가", "0원", "0원", "0원"],
      ["보험점수", "669,97점", "669,97점", "669,97점"],
      ["자보점수", "0점", "0점", "0점"]
    ];

    document.getElementById("feeRows").innerHTML = fees.map(([name, ...values]) => `
      <tr class="h-[17px]">
        <th class="w-[122px] p-0 pl-[6px] text-left font-normal bg-[#bccccc] border-t border-t-white border-r border-b border-black">${name}</th>
        ${values.map(v => `<td class="p-0 pr-[6px] text-right text-xs leading-[15px] border-r border-b border-[#c0c0c0]">${v}</td>`).join("")}
      </tr>`).join("");

    document.getElementById("libraryRows").innerHTML = Array.from({ length: 12 }, (_, i) => i === 0
      ? `<tr class="h-[17px] bg-[#3264cc]"><td class="border-b border-[#c0c0c0]"></td><td class="border-b border-[#c0c0c0]"></td></tr>`
      : `<tr class="h-[17px]"><td class="bg-[#ffffcc] border-b border-r border-[#c0c0c0]"></td><td class="border-b border-[#c0c0c0]"></td></tr>`
    ).join("");

    const registered = [
      ["usb", "EB450000", "복부-비뇨기계 초음파-방광"],
      ["usb1", "EB450001", "복부-비뇨기계 초음파-방광(제한적)"],
      ["usb2", "EB450010", "복부-비뇨기계 초음파-방광(도플러)"],
      ["usb3", "EB450011", "복부-비뇨기계 초음파-방광(도플러&nbsp; 제한적)"],
      ["usb선별", "EB450000", "복부-비뇨기계 초음파-방광"]
    ];

    document.getElementById("registeredRows").innerHTML = registered.map(([code, claim, name], i) => `
      <tr class="h-[17px] whitespace-nowrap ${i === 0 ? "bg-[#3264cc] text-white" : ""}">
        <td class="p-0 pl-[2px] border-r border-b border-[#c0c0c0] ${i === 0 ? "" : "bg-[#ffffcc]"}">${code}</td>
        <td class="p-0 pl-[2px] text-xs leading-[15px] border-r border-b border-[#c0c0c0]">${claim}</td>
        <td class="p-0 pl-[2px] border-r border-b border-[#c0c0c0]">${name}</td>
        <td class="border-b border-[#c0c0c0]"></td>
      </tr>`).join("");
  </script>

</body>
</html>
